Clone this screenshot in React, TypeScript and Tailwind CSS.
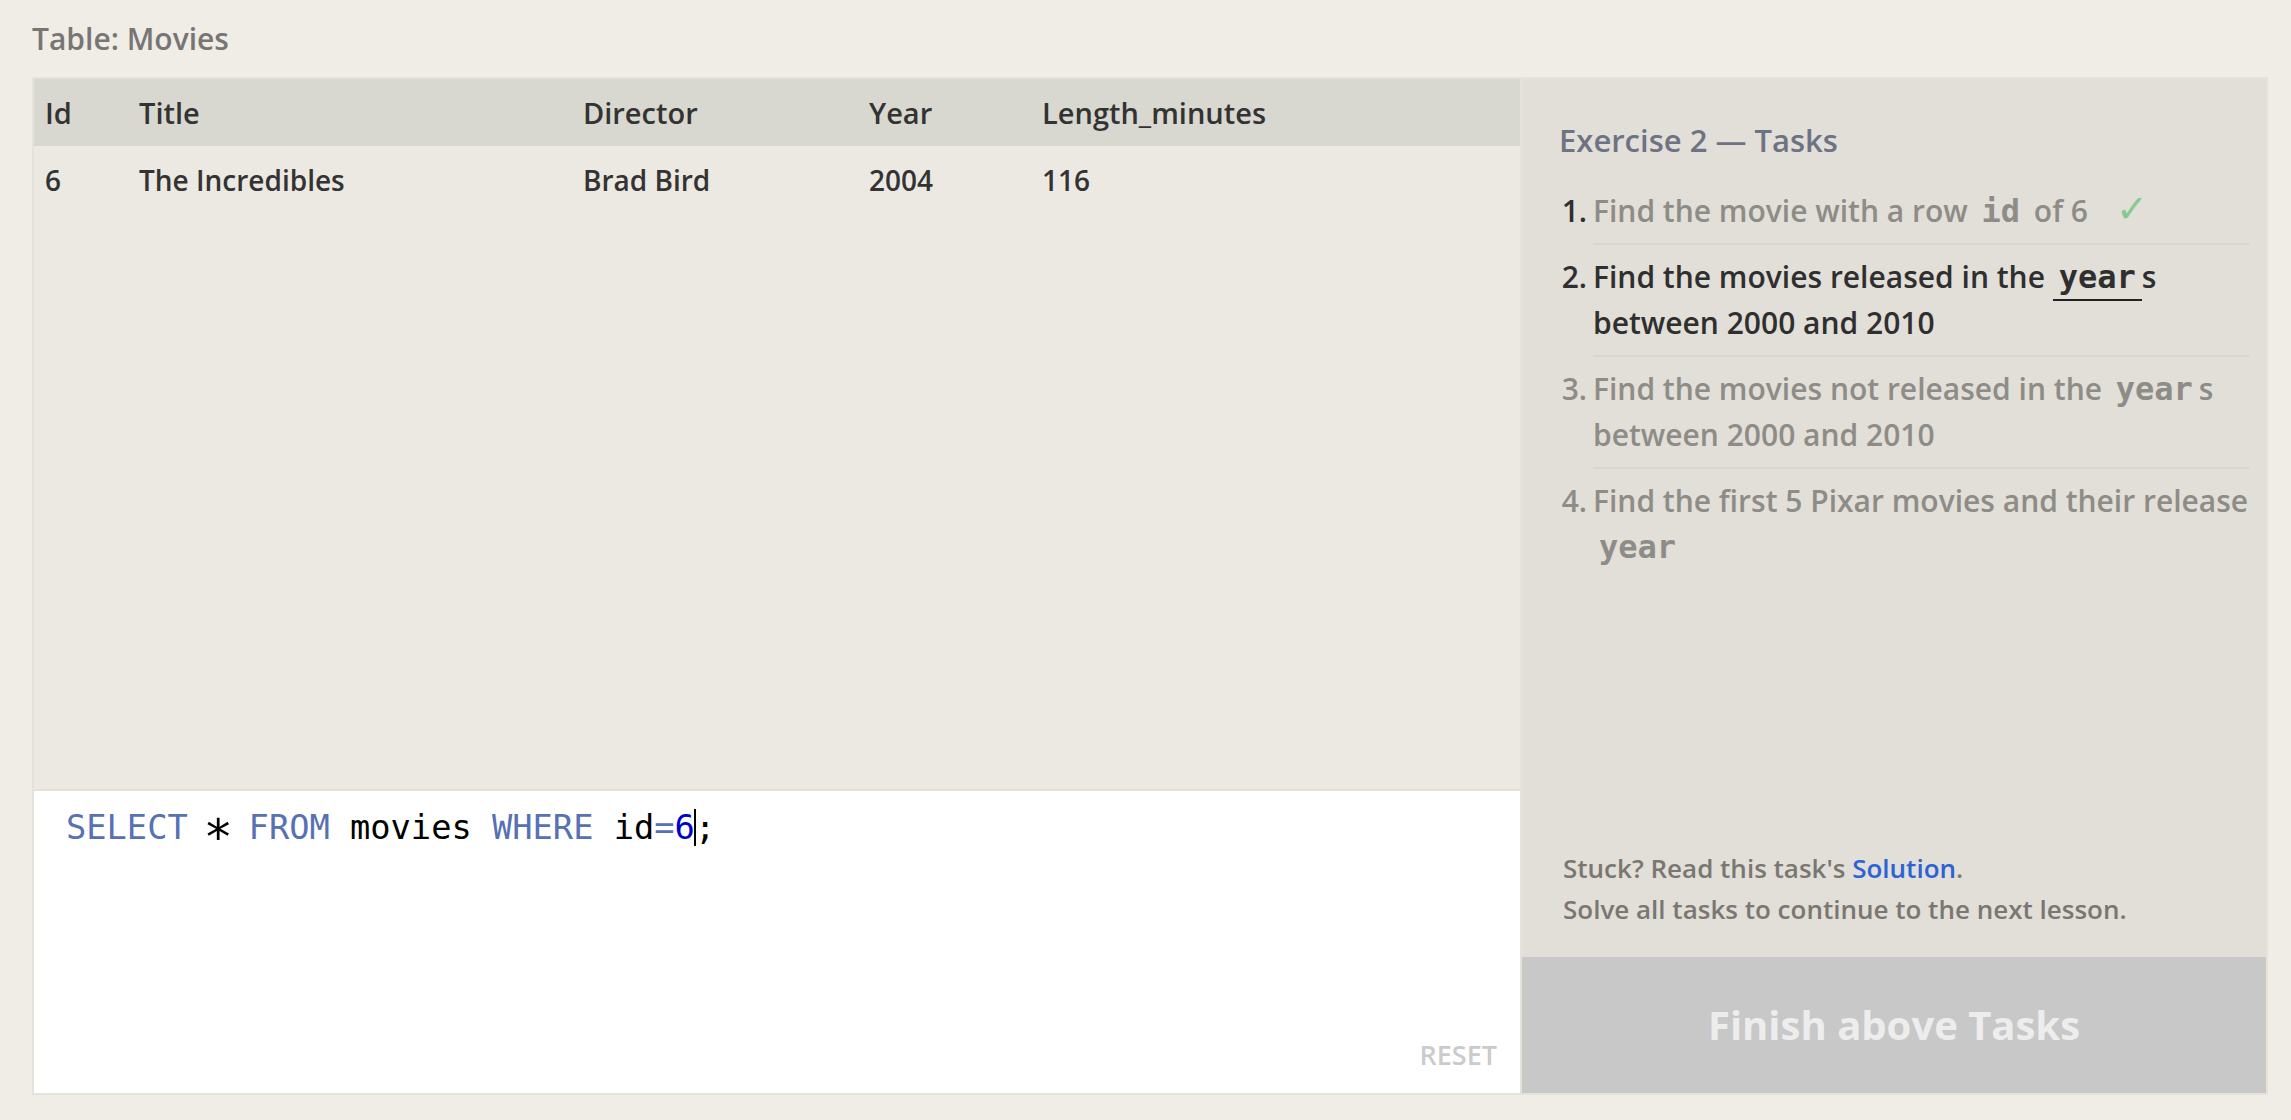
import React from "react";

const columns = [
  { key: "id", label: "Id" },
  { key: "title", label: "Title" },
  { key: "director", label: "Director" },
  { key: "year", label: "Year" },
  { key: "length", label: "Length_minutes" },
];

const rows = [{ id: 6, title: "The Incredibles", director: "Brad Bird", year: 2004, length: 116 }];

function Code({ children, active }: { children: React.ReactNode; active?: boolean }) {
  return (
    <code
      className={`font-['DejaVu_Sans_Mono',monospace] text-[32px] font-bold px-[6px] ${
        active ? "border-b-2 border-[#222] pb-[3px]" : ""
      }`}
    >
      {children}
    </code>
  );
}

function Task({
  n,
  state,
  last,
  children,
}: {
  n: number;
  state: "done" | "current" | "todo";
  last?: boolean;
  children: React.ReactNode;
}) {
  const textColor = state === "current" ? "text-[#2f2f2f]" : "text-[#8e8c87]";
  const numColor = state === "todo" ? "text-[#8e8c87]" : "text-[#2f2f2f]";
  return (
    <li className="flex">
      <span className={`w-[34px] shrink-0 text-right pr-[6px] pt-[9px] leading-[46px] ${numColor}`}>{n}.</span>
      <div
        className={`flex-1 py-[9px] leading-[46px] whitespace-nowrap ${textColor} ${
          last ? "" : "border-b-2 border-[#d9d7ce]"
        }`}
      >
        {children}
      </div>
    </li>
  );
}

export default function App() {
  return (
    <div className="min-h-screen w-full bg-[#efede6] font-['Open_Sans',sans-serif] font-semibold">
      <div className="w-[2236px] ml-[32px]">
        <div className="h-[77px] flex items-center text-[30px] text-[#777674]">Table: Movies</div>

        <div className="flex h-[1018px] border-2 border-[#e4e2da]">
          {/* table + editor */}
          <div className="w-[1486px] flex flex-col">
            <div className="flex-1 bg-[#ebe9e2]">
              <table className="w-full table-fixed text-[29px] text-[#333]">
                <colgroup>
                  <col className="w-[94px]" />
                  <col className="w-[444px]" />
                  <col className="w-[286px]" />
                  <col className="w-[173px]" />
                  <col />
                </colgroup>
                <thead>
                  <tr className="bg-[#d9d8d0] h-[67px]">
                    {columns.map((c) => (
                      <th key={c.key} className="text-left font-semibold pl-[11px]">
                        {c.label}
                      </th>
                    ))}
                  </tr>
                </thead>
                <tbody>
                  {rows.map((r) => (
                    <tr key={r.id} className="h-[67px] text-[28px]">
                      <td className="pl-[11px]">{r.id}</td>
                      <td className="pl-[11px]">{r.title}</td>
                      <td className="pl-[11px]">{r.director}</td>
                      <td className="pl-[11px]">{r.year}</td>
                      <td className="pl-[11px]">{r.length}</td>
                    </tr>
                  ))}
                </tbody>
              </table>
            </div>

            <div className="h-[304px] bg-white border-t-2 border-[#e3e1da] flex flex-col justify-between">
              <div className="pl-[32px] pt-[17px] leading-[40px] text-[33.7px] font-normal font-['DejaVu_Sans_Mono',monospace] text-black whitespace-pre">
                <span className="text-[#5870b4]">SELECT</span> <span className="inline-block scale-[1.45]">∗</span>{" "}
                <span className="text-[#5870b4]">FROM</span> movies <span className="text-[#5870b4]">WHERE</span> id
                <span className="text-[#5870b4]">=</span>
                <span className="text-[#0000c8]">6</span>
                <span className="relative">
                  <span className="absolute left-[-1px] top-[1px] bottom-[1px] w-[2px] bg-black" />;
                </span>
              </div>
              <div className="self-end pr-[23px] pb-[18px] text-[27px] text-[#cbcbcb]">RESET</div>
            </div>
          </div>

          {/* tasks */}
          <div className="flex-1 border-l-2 border-[#e4e2da] bg-[#e1dfd8] flex flex-col">
            <div className="pl-[37px] pr-[16px] pt-[41px]">
              <h2 className="text-[31px] leading-[40px] text-[#6e7383] font-semibold">Exercise 2 — Tasks</h2>
              <ol className="mt-[19px] text-[30px]">
                <Task n={1} state="done">
                  Find the movie with a row <Code>id</Code> of 6
                  <span className="ml-[28px] text-[38px] leading-none text-[#84cb8f] font-normal">✓</span>
                </Task>
                <Task n={2} state="current">
                  Find the movies released in the <Code active>year</Code>s
                  <br />
                  between 2000 and 2010
                </Task>
                <Task n={3} state="todo">
                  Find the movies not released in the <Code>year</Code>s
                  <br />
                  between 2000 and 2010
                </Task>
                <Task n={4} state="todo" last>
                  Find the first 5 Pixar movies and their release
                  <br />
                  <Code>year</Code>
                </Task>
              </ol>
            </div>

            <div className="flex-1" />

            <div className="pl-[41px] pb-[27px] text-[26px] leading-[41px] text-[#7a7772]">
              <p>
                Stuck? Read this task's <a className="text-[#2b63d6]">Solution</a>.
              </p>
              <p>Solve all tasks to continue to the next lesson.</p>
            </div>

            <div className="h-[136px] bg-[#c8c8c8] flex items-center justify-center text-[40px] font-bold text-[#ededed]">
              Finish above Tasks
            </div>
          </div>
        </div>
      </div>
    </div>
  );
}
